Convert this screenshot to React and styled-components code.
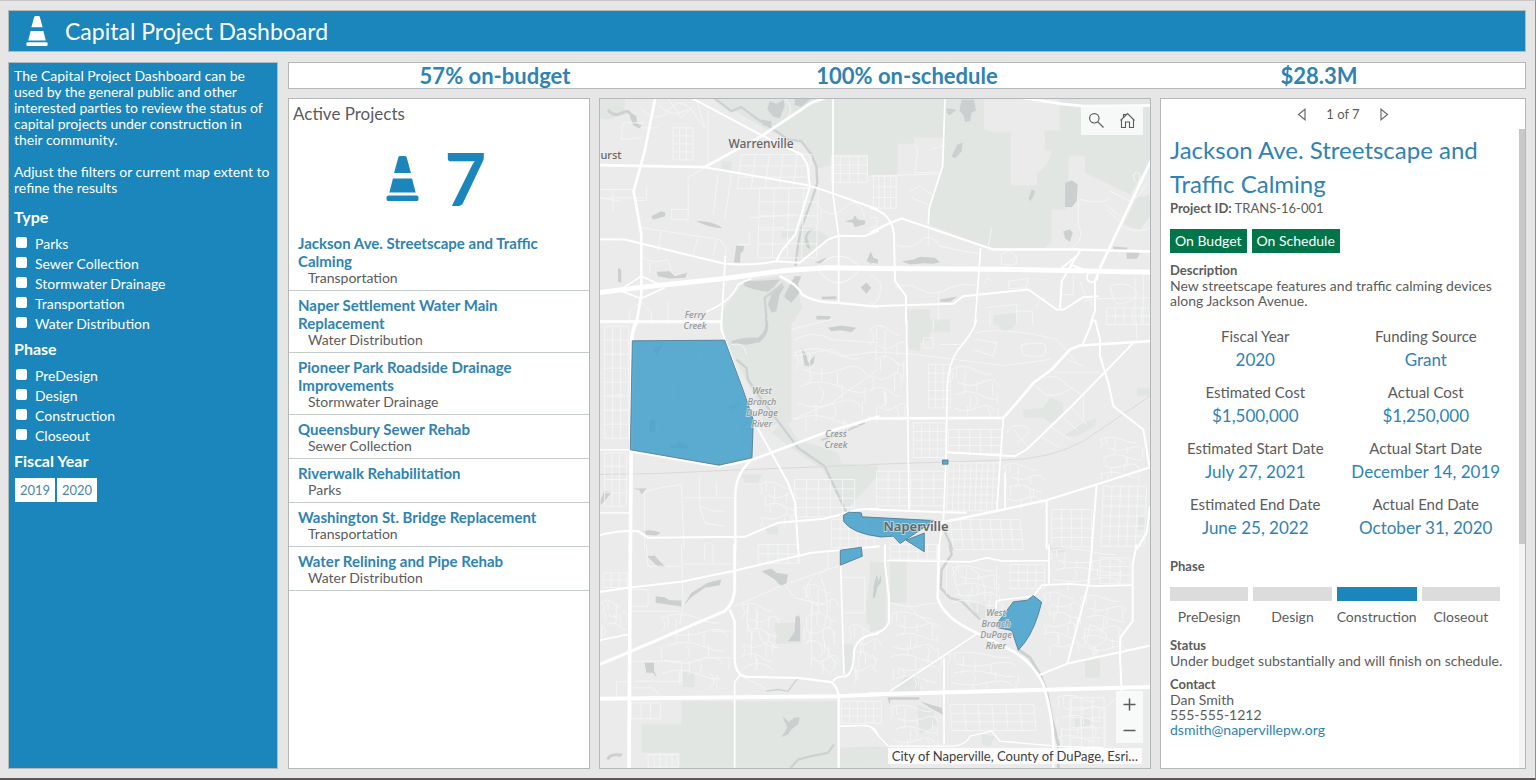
import React from 'react';
import styled, { createGlobalStyle, ThemeProvider } from 'styled-components';

const theme = {
  blue: '#1a86bb',
  link: '#2f83b3',
  green: '#00754a',
  text: '#5c5c5c',
  line: '#b4b8ba',
  page: '#e6e6e6',
  font: 'Lato, "Liberation Sans", sans-serif'
};

const GlobalStyle = createGlobalStyle`
  *, *::before, *::after {
    box-sizing: border-box;
  }
  body {
    margin: 0;
    font-family: ${theme.font};
    font-size: 14px;
    color: ${theme.text};
    background: ${theme.page};
  }
  h1, h2, h3, p, ul, dl, dd, fieldset {
    margin: 0;
    padding: 0;
  }
  button {
    font-family: inherit;
    cursor: pointer;
  }
`;

const Page = styled.div`
  min-height: 100vh;
  display: flex;
  flex-direction: column;
  gap: 10px;
  padding: 9px 9px 9px 8px;
  border-top: 1px solid #c9c7c9;
  border-right: 1px solid #8f8f8f;
  border-bottom: 2px solid #5d5659;
`;

const Header = styled.header`
  display: flex;
  align-items: center;
  gap: 13px;
  height: 42px;
  padding-left: 13px;
  color: white;
  background: ${props => props.theme.blue};
  border: 1px solid ${props => props.theme.line};
`;

const Title = styled.h1`
  font-size: 23px;
  line-height: 30px;
  font-weight: 400;
`;

const Body = styled.div`
  flex: 1;
  display: flex;
  gap: 10px;
`;

const Sidebar = styled.aside`
  flex: 0 0 270px;
  padding: 5px;
  color: white;
  line-height: 16px;
  background: ${props => props.theme.blue};
  border: 1px solid ${props => props.theme.line};
`;

const Intro = styled.p`
  max-width: ${props => (props.$wide ? 'none' : '250px')};
  margin-bottom: ${props => (props.$wide ? 10 : 16)}px;
`;

const Filter = styled.fieldset`
  border: 0;
  margin-bottom: 4px;
`;

const FilterTitle = styled.legend`
  padding: 0;
  margin-bottom: 6px;
  font-size: 16px;
  line-height: 22px;
  font-weight: 700;
`;

const Check = styled.label`
  display: flex;
  align-items: center;
  gap: 8px;
  height: 20px;
  padding-left: 2px;
  input {
    appearance: none;
    width: 11px;
    height: 11px;
    margin: 0 0 4px;
    background: white;
    border-radius: 2px;
  }
  input:checked {
    box-shadow: inset 0 0 0 3px white;
    background: ${props => props.theme.blue};
  }
`;

const Years = styled.div`
  display: flex;
  gap: 2px;
  padding: 0 1px;
`;

const YearButton = styled.button`
  width: 40px;
  height: 24px;
  padding: 0;
  font-size: 13px;
  color: #4a86a8;
  background: white;
  border: 0;
`;

const Main = styled.main`
  flex: 1;
  min-width: 0;
  display: flex;
  flex-direction: column;
  gap: 9px;
`;

const Panel = styled.section`
  min-width: 0;
  background: white;
  border: 1px solid ${props => props.theme.line};
`;

const Stats = styled(Panel)`
  display: grid;
  grid-template-columns: repeat(3, 1fr);
  height: 27px;
`;

const Stat = styled.p`
  text-align: center;
  font-size: 22px;
  line-height: 25px;
  font-weight: 700;
  color: ${props => props.theme.link};
`;

const Columns = styled.div`
  flex: 1;
  display: grid;
  grid-template-columns: minmax(0, 302fr) minmax(0, 552fr) minmax(0, 366fr);
  gap: 9px;
`;

const ListTitle = styled.h2`
  padding: 4px 4px 0;
  font-size: 17px;
  line-height: 22px;
  font-weight: 400;
`;

const Counter = styled.div`
  display: flex;
  align-items: center;
  justify-content: center;
  gap: 20px;
  height: 104px;
  padding: 2px 12px 0 0;
  color: ${props => props.theme.blue};
  font-size: 72px;
  line-height: 80px;
  font-weight: 700;
`;

const List = styled.ul`
  list-style: none;
`;

const ListItem = styled.li`
  padding: 5px 10px 5px 9px;
  border-bottom: 1px solid #c5cbc9;
`;

const ListName = styled.a`
  display: block;
  font-size: 15px;
  line-height: 18px;
  font-weight: 700;
  text-decoration: none;
  color: ${props => props.theme.link};
`;

const ListType = styled.p`
  padding-left: 10px;
  line-height: 15px;
`;

const MapPanel = styled(Panel)`
  position: relative;
  background: #ebebeb;
  overflow: hidden;
`;

const MapDrawing = styled.svg`
  position: absolute;
  inset: 0;
  width: 100%;
  height: 100%;
  font-family: "Noto Sans", sans-serif;
`;

const MapTools = styled.div`
  position: absolute;
  top: 6px;
  right: 7px;
  display: flex;
  background: rgba(250, 251, 251, 0.9);
`;

const ZoomTools = styled.div`
  position: absolute;
  right: 7px;
  bottom: 25px;
  display: flex;
  flex-direction: column;
  background: rgba(250, 251, 251, 0.9);
`;

const MapButton = styled.button`
  display: flex;
  align-items: center;
  justify-content: center;
  width: ${props => (props.$small ? 27 : 31)}px;
  height: ${props => (props.$small ? 26 : 30)}px;
  padding: 0;
  color: #5b5b5b;
  background: none;
  border: 0;
`;

const Attribution = styled.div`
  position: absolute;
  right: 8px;
  bottom: 4px;
  padding: 0 4px;
  font-size: 13px;
  line-height: 16px;
  color: #3f3f3f;
  background: rgba(255, 255, 255, 0.8);
`;

const Details = styled(Panel)`
  display: flex;
  flex-direction: column;
`;

const Pager = styled.nav`
  display: flex;
  align-items: center;
  justify-content: center;
  gap: 15px;
  height: 30px;
  font-size: 13px;
  button {
    display: flex;
    padding: 4px;
    color: #6d6d6d;
    background: none;
    border: 0;
  }
`;

const DetailsBody = styled.div`
  flex: 1;
  display: flex;
`;

const Scroll = styled.div`
  width: 6px;
  background: #f4f4f4;
  &::before {
    content: '';
    display: block;
    height: 65%;
    background: #c8c8c8;
  }
`;

const Record = styled.article`
  flex: 1;
  padding: 4px 8px 0 9px;
  line-height: 15px;
`;

const RecordTitle = styled.h2`
  font-size: 24px;
  line-height: 34px;
  font-weight: 400;
  color: ${props => props.theme.link};
`;

const ProjectId = styled.p`
  font-size: 13px;
`;

const Badges = styled.div`
  display: flex;
  gap: 5px;
  margin: 13px 0 10px;
`;

const Badge = styled.span`
  padding: 0 5px;
  line-height: 24px;
  color: white;
  background: ${props => props.theme.green};
`;

const Label = styled.h3`
  font-size: 13px;
  line-height: 15px;
  font-weight: 700;
`;

const Facts = styled.dl`
  display: grid;
  grid-template-columns: 1fr 1fr;
  row-gap: 8px;
  margin: 16px 0 19px;
  text-align: center;
  line-height: 24px;
  dt {
    font-size: 15px;
  }
  dd {
    font-size: 17px;
    color: ${props => props.theme.link};
  }
`;

const Phases = styled.div`
  display: grid;
  grid-template-columns: repeat(4, 1fr);
  gap: 5px;
  margin: 13px 11px 14px 0;
  text-align: center;
`;

const Phase = styled.div`
  &::before {
    content: '';
    display: block;
    height: 14px;
    margin-bottom: 8px;
    background: ${props => (props.$active ? props.theme.blue : '#dcdcdc')};
  }
`;

const Block = styled.div`
  margin-bottom: 9px;
`;

const Mail = styled.a`
  text-decoration: none;
  color: ${props => props.theme.link};
`;

const Cone = ({ size }) => (
  <svg width={size} height={size} viewBox="0 0 48 48" fill="currentColor" aria-hidden="true">
    <path d="M21.500 0h5q1.500 0 2 1.500L33 18H15l4.500-16.500Q20 0 21.500 0Z" />
    <path d="M13.800 24H34.200L38 39H10Z" />
    <rect x="7" y="42" width="34" height="6" rx="2" />
  </svg>
);

const SearchIcon = () => (
  <svg width="17" height="17" viewBox="0 0 17 17" fill="none" stroke="currentColor" strokeWidth="1.2">
    <circle cx="6.300" cy="6.300" r="4.700" />
    <path d="M9.800 9.800 15.500 15.500" />
  </svg>
);

const HomeIcon = () => (
  <svg width="17" height="17" viewBox="0 0 17 17" fill="none" stroke="currentColor" strokeWidth="1.100">
    <path d="M1.500 8.500 8.500 1.500 15.500 8.500M4.500 5.500V2.500H6.500V3.500M2.500 7.500V15.500H6.500V10H10.500V15.500H14.500V7.500" />
  </svg>
);

const Arrow = ({ next }) => (
  <svg width="10" height="13" viewBox="0 0 10 13" fill="none" stroke="currentColor" strokeWidth="1.200">
    <path d={next ? 'M2 1.200V11.800L8.500 6.500Z' : 'M8 1.200V11.800L1.500 6.500Z'} />
  </svg>
);

// street grid of a residential block: cols x rows cells of w x h
const grid = (x, y, cols, rows, w, h, skew = 0) => {
  let d = '';
  for (let i = 0; i <= cols; i++) d += `M${x + i * w} ${y}l${skew} ${rows * h}`;
  for (let j = 0; j <= rows; j++) d += `M${x + (j * skew) / rows} ${y + j * h}h${cols * w}`;
  return d;
};

// winding lanes and culs-de-sac
const lanes = (x, y, n, w, h) => {
  let d = '';
  for (let i = 0; i < n; i++) {
    const t = y + i * h;
    const bend = i % 2 ? h / 2 : -h / 2;
    d += `M${x + ((i * 23) % 30)} ${t}q${w / 4} ${bend} ${w / 2} 0t${w / 3} ${h / 3}`;
    d += `M${x + ((i * 37) % w)} ${t}q${h / 2} ${h / 2} 0 ${h}`;
    d += `M${x + ((i * 61 + 20) % w)} ${t - 4}v${h * 0.8}`;
    d += `M${x + ((i * 83 + 45) % w)} ${t + 3}v${h}`;
  }
  return d;
};

const tiles = [
  {
    x: 598,
    y: 95,
    parks:
      'M340 10H840V242H810V180H705V212L658 222 640 180 600 140 520 112ZM0 10H80V60L30 75 0 70ZM440 560 540 545 600 590 612 640 580 690H370L378 640 400 610ZM600 400H650L700 432 602 500ZM550 410H590V430H550ZM370 200H400V225H370Z',
    water:
      'M515 20 535 28 557 15 560 35 545 72 525 65 508 45ZM488 75 520 80 520 97 495 92ZM590 12H640L610 37 590 32ZM92 50 115 65 118 88 130 92 125 102 105 92 98 72ZM160 365 190 350 203 355 200 366 165 376ZM295 380Q340 378 372 400 340 402 295 380ZM415 453 438 455 436 470 428 475 426 505 408 503ZM60 520 70 525V565L60 562ZM175 532 215 530 230 545 268 535 262 550 215 552 180 545ZM620 430Q628 400 650 405 630 410 628 430L638 465Q620 460 620 430ZM650 505 688 488 670 508ZM740 380 765 374 770 362 780 375 802 378 800 390 770 398 765 385ZM806 500 818 470 826 490 840 495V508L812 503ZM435 560 500 558 545 555 530 575 510 592 470 585 440 575ZM520 600 545 575 560 575 545 600 535 650 520 655 510 630ZM560 600 590 545 610 545 600 570 608 590 580 625 560 610ZM788 578 805 565 820 580 805 598ZM670 607 715 605V614H672ZM655 664 698 665 695 675H655Z',
    rivers: [
      ['M350 12 400 50 430 38 480 75 520 100 570 135 610 140 640 180 655 215 658 265 640 320 610 400 600 450 592 515', 7],
      ['M30 45Q45 68 70 56T95 60', 9],
      ['M500 690 505 665 500 610 555 568', 7]
    ],
    minor:
      grid(225, 100, 3, 4, 20, 24) +
      grid(430, 180, 5, 3, 42, 34, -12) +
      grid(485, 280, 4, 5, 44, 42, -6) +
      grid(700, 185, 4, 3, 27, 26) +
      'M130 45Q180 90 215 45T290 60 320 95 300 25M180 30Q220 75 270 45M210 12 250 70 290 30M75 85H140M75 85 70 135 130 130M330 50V215M130 100H180M0 285H110M0 310H140M145 275V318H110M270 378V250L320 220M360 240 345 360M400 240 380 375M220 345H270M220 345V375H270M130 400 200 410 365 435 385 460 380 490M130 485Q160 510 210 495L220 530M155 500V540M190 410 180 470M300 430 285 480M355 435 345 485M45 290V350M0 310 70 320M95 690V650L130 620 160 655V690M210 690V620M655 330Q700 380 740 340T800 370M670 345V372M455 370 590 360M480 400H560M420 450H455V410M560 12Q590 40 570 65',
    roads: [
      ['M172 10 140 170 107 290 130 420V600L115 690', 8],
      ['M0 212 320 218 490 125 640 25 710 0', 8],
      ['M280 10 490 122', 6],
      ['M490 122 610 180 628 210 636 275 592 420 550 470 535 500M320 218 630 272 700 295 840 345', 6],
      ['M0 434 80 435 380 508Q460 515 535 500L605 505 690 435 720 424 800 425 842 408', 6],
      ['M705 10V300L722 425V625', 5],
      ['M0 595 130 578 380 552 560 528 690 520 845 522', 15],
      ['M60 590 130 545 190 572M70 590 130 612 200 580', 5],
      ['M382 485 370 690', 5],
      ['M325 652Q400 620 420 570L460 552', 5],
      ['M545 545Q600 570 612 600 650 625 720 625L842 637', 7],
      ['M655 520Q720 450 790 520 720 610 655 520', 2],
      ['M0 685H370', 3]
    ]
  },
  {
    x: 870,
    y: 95,
    parks:
      'M0 10H222V130H132V148H82V242H0ZM222 10H342V104L372 112H422V272H500V240L530 210 545 172 524 165V108H568V10H840V200L780 300 645 235V185H597L590 345H545V440L520 465H370L175 390 178 340 218 215ZM840 300 800 310 760 390 810 405 840 370ZM110 645H180V690H110ZM370 662 440 655V690H370Z',
    water:
      'M275 15H312L318 48 305 55 300 80 285 82 280 60 268 50ZM230 42 260 45 240 62 230 55ZM262 150 278 145 275 170 255 192 245 185ZM586 265 605 257 623 270 620 320 605 338 585 337ZM485 285 495 290 490 305 480 320 476 312ZM580 410 600 405 608 415 600 442 585 432ZM770 475H810L800 493H770ZM95 500 130 495 150 487 195 490 210 503 190 508 160 506 120 510ZM210 615 262 606 240 622H212ZM0 480 20 500 0 508ZM730 456 775 460 770 466H730Z',
    rivers: [],
    minor:
      grid(10, 245, 4, 3, 17, 32) +
      grid(710, 640, 5, 2, 26, 25) +
      'M0 245 210 238M133 150 143 165 135 235 210 232M180 165 225 152M120 290 150 275 185 300M125 310 175 330M0 370 20 368 22 395 0 400M80 450Q120 470 150 440T210 455L280 470 330 478M175 390V450M365 400 355 455M395 478Q420 460 437 485T420 512 395 500ZM0 540Q45 560 30 600T0 625M75 580Q110 560 150 585T240 580L275 570 318 572M205 590V680M340 570Q355 540 365 560M415 560 475 552 470 580 418 582ZM345 640 440 630V690M440 650H488V690M360 690V650M500 640Q500 610 530 610M610 540V600H570M630 560Q650 620 675 640M640 620 690 612 840 610M720 575Q760 560 790 580T780 620 730 615ZM795 550V690M820 540V690M630 315Q700 330 720 310M600 465Q650 430 625 390L625 315M720 290 780 320M705 330 750 365M710 345 755 385M755 395Q800 420 840 400M820 400 840 370M800 265Q780 240 800 235T800 285 830 270',
    roads: [
      ['M225 10 218 215 178 340 175 390', 5],
      ['M0 340Q65 355 72 420L75 560 108 605V690', 6],
      ['M0 415 60 385 95 372 370 465 620 465 842 471', 7],
      ['M460 10 575 28 640 35 842 33', 8],
      ['M-5 522 400 524 842 533', 15],
      ['M842 200 690 520', 8],
      ['M332 460 315 690', 5],
      ['M0 635 250 628 280 605 475 585 560 645H582L640 608 685 605', 6],
      ['M632 465 575 560 570 640M570 525 625 480M600 510 640 525M690 520 675 560V650L660 690', 6],
      ['M655 535q-12 24 10 28 22-2 18-26', 5]
    ]
  },
  {
    x: 598,
    y: 320,
    parks:
      'M375 0H580V310L500 320 470 230 380 60ZM520 340 560 300 600 360 720 400 730 432 840 440V470L755 560H735L675 450 600 400ZM430 465H495L480 490H440ZM500 620H540V645H510Z',
    water:
      'M400 65Q440 50 480 55 510 30 500 0H508Q520 40 485 68L445 76 400 72ZM690 25 730 18 775 25 760 38 730 32 700 35ZM610 85 625 105 630 130 650 108 648 130 635 142 620 138ZM8 540 18 515 40 518 20 545 8 555ZM105 507H145L130 525 125 512ZM135 635Q160 628 188 640L175 648 145 646ZM165 90 200 68 175 108ZM155 300H172V338H152ZM215 378 240 372V362L270 378V388L220 386ZM390 265 435 248 400 270ZM420 328 455 305 440 322Z',
    rivers: [
      ['M415 120 445 145 450 180 480 225 540 305 600 385 680 440 745 578', 7],
      ['M670 362 720 345 800 310', 6]
    ],
    rail: 'M0 465 180 462 400 452 840 435',
    minor:
      grid(20, 20, 3, 8, 24, 42) +
      grid(20, 400, 3, 4, 22, 40) +
      grid(590, 480, 5, 4, 36, 28) +
      lanes(590, 100, 5, 230, 50) +
      lanes(485, 495, 4, 110, 32) +
      grid(700, 600, 5, 3, 26, 28) +
      'M140 690V520Q150 508 250 495L258 690M258 535H410M305 470V560L320 610 375 620M305 560 345 575H378M355 490V530M580 30 700 0M590 60Q650 30 700 60L840 70M585 110 700 90 740 110 840 95M840 150 700 250 585 300M400 75Q440 65 445 105M105 165Q150 165 180 155 220 150 225 190V240L260 285Q300 330 370 328L460 320M110 70V160M110 220H150V380M180 350V300H225M250 90V140H340M300 70 310 140M275 100 375 90M250 170H390M50 225H75',
    roads: [
      ['M118 0Q100 40 102 62L97 692', 11],
      ['M0 5H370', 5],
      ['M370 0V30L470 310 570 490 592 550 600 690', 6],
      ['M0 391H98M0 580H95', 4],
      ['M100 395 363 441 465 420 680 340 845 290', 8],
      ['M460 422Q415 460 412 520V692', 7],
      ['M0 648Q60 632 120 635L150 655 440 652Q490 630 540 610L680 598 780 570 842 568', 6]
    ]
  },
  {
    x: 870,
    y: 320,
    parks:
      'M115 0H180V40L180 60 150 70V95L115 90ZM180 0H240V38H180ZM370 0H440L430 25 400 40ZM460 270 520 265 540 235 580 250V290L540 312 520 295H460ZM800 205H840V230H800ZM0 440 15 450V480H0ZM580 350 640 310 680 295 675 320 620 350ZM805 590H830V630H805Z',
    water: '',
    rivers: [['M225 638 250 692', 7]],
    rail: 'M0 435 400 422Q540 420 640 365L840 230',
    minor:
      grid(175, 135, 3, 5, 22, 26) +
      grid(20, 455, 6, 4, 34, 26) +
      grid(235, 430, 9, 6, 17, 24, -5) +
      grid(235, 330, 5, 3, 32, 24) +
      grid(130, 310, 4, 4, 24, 26) +
      grid(240, 600, 7, 3, 30, 30, 10) +
      grid(545, 570, 4, 4, 30, 28) +
      grid(700, 500, 5, 6, 26, 30, -8) +
      lanes(690, 360, 5, 130, 26) +
      lanes(0, 30, 6, 110, 46) +
      lanes(400, 440, 4, 120, 32) +
      lanes(240, 150, 4, 150, 38) +
      'M0 98 110 102 240 118 400 138 540 120M315 40Q350 30 420 35T560 60L620 130M320 60 380 70 370 110 310 90M455 75Q450 110 480 110H520Q540 75 510 70ZM590 120 640 140M550 158H690M520 175Q560 160 590 195L640 230M510 350 570 385M540 320 600 360M575 290 625 335M605 265 650 315M640 230V300M160 55H190V85H160ZM210 75H270M500 200Q530 250 600 210M410 340Q420 310 460 320T440 370M430 330 480 390M190 0V35M800 0V60',
    roads: [
      ['M110 0V60L117 570', 5],
      ['M320 0Q310 40 265 90 235 130 232 200L228 420 220 605 205 690', 5],
      ['M-5 297 400 295Q450 240 490 190L545 150 600 90 630 78 842 65', 8],
      ['M670 0 638 75M675 0 690 60V110L715 190 730 260 820 330 838 440', 6],
      ['M790 70 600 265 470 390 435 410 230 398', 6],
      ['M400 295 380 575M405 460V570', 5],
      ['M200 612 400 570 530 542 680 495 842 443', 7],
      ['M530 542V690M680 495 665 690M0 570 220 578 290 580', 6],
      ['M840 560 830 640 800 690', 6]
    ]
  },
  {
    x: 598,
    y: 545,
    parks:
      'M250 470H720V670H245V625H130V538H250ZM725 610 840 605V670H725ZM530 235H610V298H530ZM805 180 820 60 840 60V240H805ZM255 380H290V428H255ZM738 300H765V385H738Z',
    water:
      'M147 35 170 33 180 45 203 67H180ZM173 155 200 158 215 167 250 168V186L173 175ZM258 182 280 145 330 115 370 105 365 122 320 130 280 158ZM490 80 520 72 535 85 570 90 565 120 550 125 530 105ZM592 218Q605 205 606 225V290H570L590 262ZM140 355H168V378L177 400 165 385H145ZM25 645Q30 620 75 628L68 637Q40 632 35 645ZM553 515 572 532 590 520 605 518 600 540 580 555 570 570 550 578 568 550ZM822 160 840 85V160Z',
    rivers: [
      ['M578 670 600 645 640 635 690 625 708 600', 7],
      ['M505 440 540 435 570 440 598 403', 4]
    ],
    minor:
      grid(15, 85, 3, 2, 24, 22) +
      grid(100, 475, 3, 1, 29, 48) +
      grid(150, 630, 5, 1, 18, 38) +
      grid(730, 470, 5, 3, 24, 22) +
      grid(480, 0, 4, 2, 30, 28) +
      lanes(190, 220, 5, 210, 42) +
      lanes(430, 185, 5, 110, 38) +
      lanes(615, 130, 6, 100, 42) +
      lanes(10, 175, 3, 70, 34) +
      lanes(750, 250, 4, 90, 40) +
      'M145 0 150 65H250M250 0 255 180 245 240M255 58H410M320 0V50M345 0V55M100 135H150V185H100M100 200H245M110 410H250V350H105M105 430H165L185 455M55 460V412H95M410 185 560 120 720 65M450 180Q440 230 460 270V340M480 200Q470 260 500 300L540 310M560 120 590 160 680 180M640 100Q610 140 640 180V330L700 390M670 100Q700 180 680 240T720 360M725 98H800V205H735M600 0 605 60M690 20V70L660 95M320 340H410M340 260H400M420 385Q480 330 530 380M430 395 500 430',
    roads: [
      ['M97 0 93 672', 11],
      ['M0 143 90 130 250 112 412 78 640 25 725 17 845 5', 6],
      ['M0 362 95 322 380 200Q410 175 410 130V0', 9],
      ['M395 195 410 230V340Q410 395 450 397L600 400 700 413Q722 430 722 460V670', 7],
      ['M430 388 410 412V670', 5],
      ['M705 412Q710 395 745 395 768 380 768 320 780 270 842 268', 6],
      ['M0 463 720 455 845 449', 12],
      ['M0 288 90 270M600 0 603 35M728 60 738 390M725 545 800 543Q830 545 840 570', 5]
    ]
  },
  {
    x: 870,
    y: 545,
    parks:
      'M0 50 48 55V250L0 265ZM60 50H110V175H60ZM0 610 55 605 60 640V670H0ZM110 390 160 400 150 440H70ZM540 0 600 15 570 25H540ZM645 340H690V400H645ZM615 515H660V550H615ZM140 480 190 500 200 540 150 570ZM300 175H345V225L320 215ZM335 570 375 575 360 605 335 600Z',
    water:
      'M8 160 12 120 20 90 26 110 32 90 34 112 22 130 15 160ZM52 458H148V466H62L58 480ZM150 470 180 480 215 490 218 510 180 490Z',
    rivers: [
      ['M238 0 245 30 215 75 212 130 240 160 275 170 330 225', 7],
      ['M445 315 480 340 510 390 530 440 545 520 565 600V670', 9]
    ],
    minor:
      grid(60, 0, 5, 2, 28, 22) +
      grid(240, 480, 6, 3, 42, 26, 6) +
      grid(600, 460, 3, 5, 34, 30) +
      grid(690, 40, 3, 3, 30, 26) +
      grid(420, 60, 4, 3, 26, 24) +
      lanes(245, 70, 5, 150, 26) +
      lanes(60, 210, 7, 150, 32) +
      lanes(235, 330, 4, 220, 28) +
      lanes(520, 150, 6, 110, 30) +
      lanes(630, 160, 6, 140, 30) +
      lanes(60, 490, 4, 150, 32) +
      lanes(560, 460, 6, 140, 30) +
      lanes(540, 20, 4, 240, 28) +
      'M60 175Q120 195 160 180L205 175M110 175 140 210 200 250M660 240Q690 250 705 265T690 300 650 290ZM705 610V490L740 460M230 60V150M265 60Q240 100 270 150M300 70Q350 90 345 170M380 60V160',
    roads: [
      ['M-5 450 440 438 845 427', 12],
      ['M207 0 203 160Q220 220 320 265L410 310Q490 350 520 420 550 520 550 600V670', 8],
      ['M320 268 60 440M222 340V600', 5],
      ['M45 0V60L57 160V230Q50 260 0 272', 6],
      ['M50 48 300 52 350 40 400 50 535 48M537 0V118M375 210 380 168 490 155 515 122 600 118 680 125 785 122', 5],
      ['M500 395 590 358 842 303', 6],
      ['M667 0 655 120 592 358', 6],
      ['M800 0 788 60V230L750 280V340L755 440', 6],
      ['M0 545Q30 580 55 605L250 605Q290 600 300 575L365 560 390 590 560 605 700 610', 4]
    ]
  }
];

const areas = [
  'M632.300 341.300 724.700 340.700 743 390 753.300 420 752 458.300 719 465.700 630.300 450.300Z',
  'M843.300 515.700 848.700 512.700 861.300 513.300 862 517.300 934 521 915 534 900 544 893.300 536.700 881 537.500Q852 534 843.800 522Z',
  'M906 540.700 924.300 533.500V552.300Z',
  'M840.300 550.700 861.300 547.700 862.300 556.700 840.300 565.700Z',
  'M942.500 460.500H948V464.700H942.500Z',
  'M1013.300 602.300 1027.300 600.700 1033.300 596 1041.700 602.700 1038.300 615Q1031 638 1018.300 650.700L1011.700 631 998.300 628.300 997 624Z'
];

const labels = [
  { x: 761, y: 148, size: 12, lines: ['Warrenville'], place: true },
  { x: 611, y: 159, size: 11, lines: ['urst'], place: true },
  { x: 695, y: 318, size: 9, lines: ['Ferry', 'Creek'] },
  { x: 762, y: 394, size: 9, lines: ['West', 'Branch', 'DuPage', 'River'] },
  { x: 836, y: 437, size: 9, lines: ['Cress', 'Creek'] },
  { x: 916, y: 531, size: 13, lines: ['Naperville'], place: true, bold: true },
  { x: 996, y: 616, size: 9, lines: ['West', 'Branch', 'DuPage', 'River'] }
];

const place = t => `translate(${t.x} ${t.y}) scale(${1 / 3})`;

const CityMap = () => (
  <MapDrawing viewBox="600 99 550 670" preserveAspectRatio="xMidYMid slice" role="img" aria-label="Map of Naperville">
    {tiles.map(t => (
      <g key={`land${t.x}-${t.y}`} transform={place(t)}>
        <path d={t.parks} fill="#e2e6e3" />
        <path d={t.water} fill="#cbcfd0" />
        {t.rivers.map(([d, w]) => (
          <path key={d} d={d} fill="none" stroke="#cdd1d1" strokeWidth={w} strokeLinejoin="round" />
        ))}
        {t.rail && <path d={t.rail} fill="none" stroke="#dadada" strokeWidth="3" />}
      </g>
    ))}
    {tiles.map(t => (
      <path
        key={`minor${t.x}-${t.y}`}
        transform={place(t)}
        d={t.minor}
        fill="none"
        stroke="#f5f6f6"
        strokeWidth="2.5"
      />
    ))}
    {tiles.map(t => (
      <g key={`road${t.x}-${t.y}`} transform={place(t)} fill="none" stroke="#fff" strokeLinejoin="round">
        {t.roads.map(([d, w]) => (
          <path key={d} d={d} strokeWidth={w} />
        ))}
      </g>
    ))}
    {areas.map(d => (
      <path key={d} d={d} fill="#3f9fcb" fillOpacity=".84" stroke="#4d7488" strokeWidth=".8" />
    ))}
    {labels.map(l => (
      <text
        key={l.lines[0] + l.x}
        x={l.x}
        y={l.y}
        textAnchor="middle"
        fontSize={l.size}
        fontStyle={l.place ? 'normal' : 'italic'}
        fontWeight={l.bold ? 600 : 500}
        fill={l.place ? '#666' : '#939797'}
        stroke="#eee"
        strokeOpacity=".6"
        strokeWidth="2"
        paintOrder="stroke"
      >
        {l.lines.map((line, i) => (
          <tspan key={line} x={l.x} dy={i ? 11 : 0}>
            {line}
          </tspan>
        ))}
      </text>
    ))}
  </MapDrawing>
);

const filters = [
  { title: 'Type', options: ['Parks', 'Sewer Collection', 'Stormwater Drainage', 'Transportation', 'Water Distribution'] },
  { title: 'Phase', options: ['PreDesign', 'Design', 'Construction', 'Closeout'] }
];

const projects = [
  ['Jackson Ave. Streetscape and Traffic Calming', 'Transportation'],
  ['Naper Settlement Water Main Replacement', 'Water Distribution'],
  ['Pioneer Park Roadside Drainage Improvements', 'Stormwater Drainage'],
  ['Queensbury Sewer Rehab', 'Sewer Collection'],
  ['Riverwalk Rehabilitation', 'Parks'],
  ['Washington St. Bridge Replacement', 'Transportation'],
  ['Water Relining and Pipe Rehab', 'Water Distribution']
];

const facts = [
  ['Fiscal Year', '2020'],
  ['Funding Source', 'Grant'],
  ['Estimated Cost', '$1,500,000'],
  ['Actual Cost', '$1,250,000'],
  ['Estimated Start Date', 'July 27, 2021'],
  ['Actual Start Date', 'December 14, 2019'],
  ['Estimated End Date', 'June 25, 2022'],
  ['Actual End Date', 'October 31, 2020']
];

const App = () => (
  <ThemeProvider theme={theme}>
    <GlobalStyle />
    <Page>
      <Header>
        <Cone size={30} />
        <Title>Capital Project Dashboard</Title>
      </Header>
      <Body>
        <Sidebar>
          <Intro>
            The Capital Project Dashboard can be used by the general public and other interested parties to review the
            status of capital projects under construction in their community.
          </Intro>
          <Intro $wide>Adjust the filters or current map extent to refine the results</Intro>
          {filters.map(filter => (
            <Filter key={filter.title}>
              <FilterTitle>{filter.title}</FilterTitle>
              {filter.options.map(option => (
                <Check key={option}>
                  <input type="checkbox" />
                  {option}
                </Check>
              ))}
            </Filter>
          ))}
          <Filter>
            <FilterTitle>Fiscal Year</FilterTitle>
            <Years>
              <YearButton type="button">2019</YearButton>
              <YearButton type="button">2020</YearButton>
            </Years>
          </Filter>
        </Sidebar>
        <Main>
          <Stats>
            <Stat>57% on-budget</Stat>
            <Stat>100% on-schedule</Stat>
            <Stat>$28.3M</Stat>
          </Stats>
          <Columns>
            <Panel>
              <ListTitle>Active Projects</ListTitle>
              <Counter>
                <Cone size={45} />
                7
              </Counter>
              <List>
                {projects.map(([name, type]) => (
                  <ListItem key={name}>
                    <ListName href="#project">{name}</ListName>
                    <ListType>{type}</ListType>
                  </ListItem>
                ))}
              </List>
            </Panel>
            <MapPanel>
              <CityMap />
              <MapTools>
                <MapButton type="button" aria-label="Search">
                  <SearchIcon />
                </MapButton>
                <MapButton type="button" aria-label="Home">
                  <HomeIcon />
                </MapButton>
              </MapTools>
              <ZoomTools>
                <MapButton $small type="button" aria-label="Zoom in">
                  <svg width="13" height="13" viewBox="0 0 13 13" stroke="currentColor" strokeWidth="1.500">
                    <path d="M6.500 .500V12.500M.500 6.500H12.500" />
                  </svg>
                </MapButton>
                <MapButton $small type="button" aria-label="Zoom out">
                  <svg width="13" height="13" viewBox="0 0 13 13" stroke="currentColor" strokeWidth="1.500">
                    <path d="M.500 6.500H12.500" />
                  </svg>
                </MapButton>
              </ZoomTools>
              <Attribution>City of Naperville, County of DuPage, Esri…</Attribution>
            </MapPanel>
            <Details>
              <Pager>
                <button type="button" aria-label="Previous">
                  <Arrow />
                </button>
                <span>1 of 7</span>
                <button type="button" aria-label="Next">
                  <Arrow next />
                </button>
              </Pager>
              <DetailsBody>
                <Record>
                  <RecordTitle>Jackson Ave. Streetscape and Traffic Calming</RecordTitle>
                  <ProjectId>
                    <b>Project ID:</b> TRANS-16-001
                  </ProjectId>
                  <Badges>
                    <Badge>On Budget</Badge>
                    <Badge>On Schedule</Badge>
                  </Badges>
                  <Label>Description</Label>
                  <p>New streetscape features and traffic calming devices along Jackson Avenue.</p>
                  <Facts>
                    {facts.map(([label, value]) => (
                      <div key={label}>
                        <dt>{label}</dt>
                        <dd>{value}</dd>
                      </div>
                    ))}
                  </Facts>
                  <Label>Phase</Label>
                  <Phases>
                    {filters[1].options.map(phase => (
                      <Phase key={phase} $active={phase === 'Construction'}>
                        {phase}
                      </Phase>
                    ))}
                  </Phases>
                  <Block>
                    <Label>Status</Label>
                    <p>Under budget substantially and will finish on schedule.</p>
                  </Block>
                  <Block>
                    <Label>Contact</Label>
                    <p>Dan Smith</p>
                    <p>555-555-1212</p>
                    <Mail href="mailto:dsmith@napervillepw.org">dsmith@napervillepw.org</Mail>
                  </Block>
                </Record>
                <Scroll />
              </DetailsBody>
            </Details>
          </Columns>
        </Main>
      </Body>
    </Page>
  </ThemeProvider>
);

export default App;
